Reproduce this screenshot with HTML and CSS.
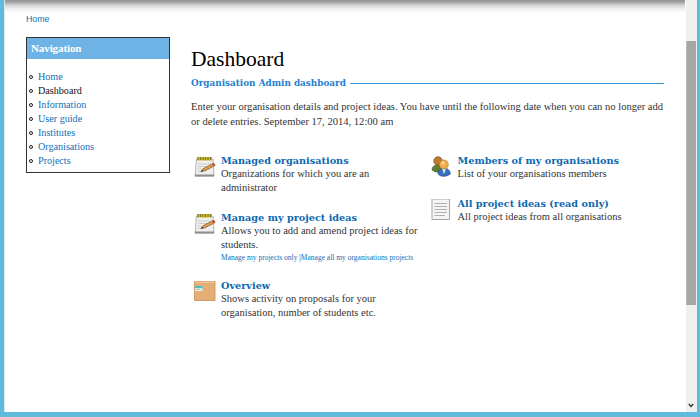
FILE: index.html
```
<!DOCTYPE html>
<html lang="en">
<head>
<meta charset="utf-8">
<title>Dashboard</title>
<link rel="stylesheet" href="styles.css">
</head>
<body>
<svg class="defs" width="0" height="0">
  <symbol id="notepad" viewBox="0 0 22 22">
    <path d="M2.500 3 19 3 20 20 1 20Z" fill="#eeeeec" stroke="#a4a4a0" stroke-width=".8"/>
    <path d="M1 18.500H20V20.500H1Z" fill="#8e8e8c"/>
    <path d="M4 8H17M4 10.500H14M3.500 13H12M3.500 15.500H9" stroke="#c4c4c4" stroke-width=".8"/>
    <path d="M3 1H18V4.500H3Z" fill="#c9b82f"/>
    <path d="M4 1V4M6.500 1V4M9 1V4M11.500 1V4M14 1V4M16.500 1V4" stroke="#776d20" stroke-width=".9"/>
    <path d="M7 15.500 9.500 12.500 19 7.500 21 9.500 11 14.800Z" fill="#e79b45" stroke="#76502c" stroke-width=".7"/>
    <path d="M18 8 19.500 7 21.500 8.500 20 10Z" fill="#b94a35"/>
    <path d="M6.500 15.800 8.200 14 9.200 15Z" fill="#222"/>
  </symbol>
</svg>
<div class="window">
  <div class="page">
    <div class="topshade"></div>
    <div class="crumb"><a>Home</a></div>
    <div class="columns">
      <nav class="nav">
        <h2>Navigation</h2>
        <ul>
          <li><a>Home</a></li>
          <li class="active"><a>Dashboard</a></li>
          <li><a>Information</a></li>
          <li><a>User guide</a></li>
          <li><a>Institutes</a></li>
          <li><a>Organisations</a></li>
          <li><a>Projects</a></li>
        </ul>
      </nav>
      <main>
        <h1>Dashboard</h1>
        <div class="legend"><span>Organisation Admin dashboard</span></div>
        <p class="intro">Enter your organisation details and project ideas. You have until the following date when you can no longer add<br>or delete entries. September 17, 2014, 12:00 am</p>
        <div class="cards">
          <div class="col">
            <section class="card tall">
              <svg class="icon" viewBox="0 0 22 22"><use href="#notepad"/></svg>
              <div><h3>Managed organisations</h3><p>Organizations for which you are an<br>administrator</p></div>
            </section>
            <section class="card links">
              <svg class="icon" viewBox="0 0 22 22"><use href="#notepad"/></svg>
              <div><h3>Manage my project ideas</h3><p>Allows you to add and amend project ideas for<br>students.</p>
              <div class="small"><a>Manage my projects only</a> <i>|</i><a>Manage all my organisations projects</a></div></div>
            </section>
            <section class="card">
              <svg class="icon" viewBox="0 0 22 22">
                <path d="M.5 0H21V19.500H.5Z" fill="#e4ae77" stroke="#c58d57" stroke-width=".8"/>
                <path d="M1 .5H20.500V2H1Z" fill="#efc494"/>
                <path d="M1 5H8.500V10H1Z" fill="#e5f1ed"/>
                <path d="M1 5H8.500V7.200H1Z" fill="#45bfc9"/>
                <path d="M2 8.500H6" stroke="#97b7b5" stroke-width=".7"/>
              </svg>
              <div><h3>Overview</h3><p>Shows activity on proposals for your<br>organisation, number of students etc.</p></div>
            </section>
          </div>
          <div class="col">
            <section class="card short">
              <svg class="icon" viewBox="0 0 22 22">
                <path d="M1 14Q1 9.500 6 9 11 9.500 12 14L10 16Q4 17 1 14Z" fill="#5c7e35" stroke="#3c5822" stroke-width=".6"/>
                <circle cx="7" cy="5" r="4.200" fill="#bd7b30" stroke="#70471d" stroke-width=".7"/>
                <path d="M7 18Q7 12.500 13 12 19 12.500 19.300 18 16 20.500 13 20.300 9 20.500 7 18Z" fill="#3a73bd" stroke="#244c85" stroke-width=".7"/>
                <path d="M11 12.500 13 18 15 12.500Z" fill="#e4edf7"/>
                <circle cx="12.800" cy="8.500" r="4.500" fill="#f0ae50" stroke="#b87425" stroke-width=".7"/>
                <circle cx="12" cy="7" r="1.800" fill="#fbd18b"/>
              </svg>
              <div><h3>Members of my organisations</h3><p>List of your organisations members</p></div>
            </section>
            <section class="card">
              <svg class="icon" viewBox="0 0 22 22">
                <path d="M1 0H18.500V20.500H1Z" fill="#f4f4f4" stroke="#a5a5a5"/>
                <path d="M3.500 4.500H16M3.500 7.500H16M3.500 10.500H16M3.500 13.500H16M3.500 16.500H14" stroke="#b0b0b0"/>
              </svg>
              <div><h3>All project ideas (read only)</h3><p>All project ideas from all organisations</p></div>
            </section>
          </div>
        </div>
      </main>
    </div>
  </div>
  <div class="scroll">
    <div class="thumb"></div>
    <svg class="arrow" viewBox="0 0 6 5"><path d="M.8 1 3 3.500 5.200 1" fill="none" stroke="#333" stroke-width="1.400"/></svg>
  </div>
</div>
</body>
</html>
```
FILE: styles.css
```
* { box-sizing: border-box; }
body { margin: 0; background: #5fbbdc; font-family: Georgia, "Liberation Serif", serif; color: #333; }
h1, h2, h3, p, ul { margin: 0; padding: 0; }
a { color: #0f70b7; }
.defs { display: block; }
.window { display: flex; width: 700px; height: 417px; border: solid #5fbbdc; border-width: 0 2px 5px 4px; }
.page { flex: 1; background: #fff; border-left: 1px solid #dce6ea; }
.topshade { height: 13px; background: linear-gradient(#929292 0, #a2a2a2 2px, #d0d0d0 5px, #f1f1f1 9px, #fff 13px); margin-right: 1px; }
.crumb { height: 24px; padding-left: 21px; font: 8.800px/12px "Liberation Sans", sans-serif; }
.columns { display: flex; padding-left: 21px; }
.nav { width: 144px; height: 136px; border: 1px solid #333; }
.nav h2 { height: 21px; padding-left: 4px; background: #6eb3e5; color: #fff; font-size: 11px; line-height: 21px; letter-spacing: -.1px; }
.nav ul { list-style: none; padding: 10.500px 0 0 2px; }
.nav li { display: flex; align-items: center; gap: 5px; height: 14.050px; font-size: 10.150px; line-height: 14px; }
.nav li::before { content: ""; box-sizing: border-box; width: 4px; height: 4px; flex: none; border: 1px solid #222; border-radius: 50%; margin-top: 1px; }
.nav .active a { color: #111; }
main { width: 473px; margin-left: 21px; padding-top: 9px; }
h1 { font-size: 21.500px; font-weight: 400; line-height: 26px; color: #000; }
.legend { display: flex; align-items: center; gap: 4px; margin-top: 4px; height: 14px; font: 700 8.850px/14px Georgia, "DejaVu Serif", serif; color: #1e80d0; white-space: nowrap; }
.legend::after { content: ""; flex: 1; height: 1px; background: #3a9be0; }
.intro { margin-top: 10px; font-size: 10.570px; line-height: 14.500px; white-space: nowrap; }
.cards { display: flex; margin-top: 25px; }
.col { width: 236.500px; }
.card { display: flex; height: 50px; white-space: nowrap; }
.card.tall { height: 57px; }
.card.links { height: 68px; }
.card.short { height: 43px; }
.icon { width: 22px; height: 22px; margin: 2px 5px 0 3px; flex: none; }
h3 { font: 700 9.700px/14px Georgia, "DejaVu Serif", serif; color: #0c68b0; }
.card p { font-size: 10.500px; line-height: 14.500px; margin-top: -1.500px; }
.small { font-size: 7.500px; line-height: 10px; }
.small i { font-style: normal; }
.scroll { width: 11px; background: #efefef; display: flex; flex-direction: column; justify-content: space-between; padding: 41px 1px 2px 0; margin-right: 1px; }
.thumb { height: 264px; background: #a6a6a6; border-left: 1px solid #bbb; }
.arrow { width: 6px; height: 5px; margin: 0 0 2px 2px; }
```
